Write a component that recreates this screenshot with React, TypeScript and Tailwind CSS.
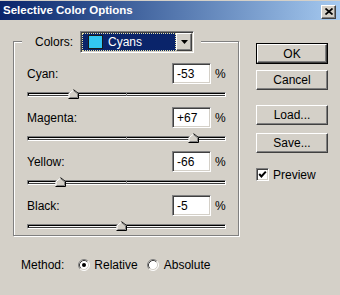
import React from "react";

const raised =
  "border border-t-white border-l-white border-r-[#404040] border-b-[#404040] shadow-[inset_-1px_-1px_0_#808080] bg-[#d4d0c8]";
const sunken =
  "border border-t-[#808080] border-l-[#808080] border-r-white border-b-white shadow-[inset_1px_1px_0_#404040,inset_-1px_-1px_0_#d4d0c8]";

function Thumb() {
  return (
    <svg width="11" height="10" viewBox="0 0 11 10">
      <polygon points="0.5,9.5 0.5,4.5 5.5,0.5 10.5,4.5 10.5,9.5" fill="#d4d0c8" />
      <polyline points="1,9 1,4.7 5.5,1.1" fill="none" stroke="#ffffff" strokeWidth="1" />
      <polyline points="5.5,0.6 10.5,4.6 10.5,9.5 0.5,9.5" fill="none" stroke="#000000" strokeWidth="1" />
      <polyline points="5.5,1.6 9.5,4.8 9.5,8.5 1.5,8.5" fill="none" stroke="#808080" strokeWidth="1" />
    </svg>
  );
}

function Slider({ value }: { value: number }) {
  const left = ((value + 100) / 200) * 199 - 5.5;
  return (
    <div className="relative h-[10px] mt-[5px]">
      <div className="mt-[3px] h-[5px] border border-t-[#808080] border-l-[#808080] border-r-white border-b-white">
        <div className="h-[3px] border-t border-l border-b border-t-[#000] border-l-[#000] border-b-[#404040] bg-[#f4f4f4]" />
      </div>
      <div className="absolute left-[99px] top-[4px] w-[1px] h-[3px] bg-[#808080]" />
      <div className="absolute top-0" style={{ left: `${left}px` }}>
        <Thumb />
      </div>
    </div>
  );
}

function Row({ label, value, num }: { label: string; value: string; num: number }) {
  return (
    <div className="flex flex-col">
      <div className="h-[21px] flex items-center">
        <span className="flex-1">{label}</span>
        <div className={`w-[39px] h-[21px] bg-white flex items-center pl-[4px] ${sunken}`}>{value}</div>
        <span className="ml-[4px] w-[11px]">%</span>
      </div>
      <Slider value={num} />
    </div>
  );
}

function Radio({ checked }: { checked: boolean }) {
  return (
    <svg width="12" height="12" viewBox="0 0 12 12">
      <circle cx="6" cy="6" r="5" fill="#ffffff" />
      <path d="M2.11 9.89 A5.5 5.5 0 0 1 9.89 2.11" fill="none" stroke="#808080" strokeWidth="1" />
      <path d="M9.89 2.11 A5.5 5.5 0 0 1 2.11 9.89" fill="none" stroke="#ffffff" strokeWidth="1" />
      <path d="M2.82 9.18 A4.5 4.5 0 0 1 9.18 2.82" fill="none" stroke="#404040" strokeWidth="1" />
      <path d="M9.18 2.82 A4.5 4.5 0 0 1 2.82 9.18" fill="none" stroke="#d4d0c8" strokeWidth="1" />
      {checked && <circle cx="6" cy="6" r="2" fill="#000000" />}
    </svg>
  );
}

function Button({ children, def, className }: { children: React.ReactNode; def?: boolean; className?: string }) {
  if (def) {
    return (
      <div className={`w-[72px] h-[21px] border border-black flex ${className ?? ""}`}>
        <div className={`flex-1 flex items-center justify-center ${raised}`}>{children}</div>
      </div>
    );
  }
  return (
    <div className={`w-[72px] h-[20px] flex items-center justify-center ${raised} ${className ?? ""}`}>
      {children}
    </div>
  );
}

export default function App() {
  return (
    <div className="w-[340px] h-[295px] bg-[#d4d0c8] flex flex-col overflow-hidden text-black text-[12px] leading-none font-['Liberation_Sans',Arial,sans-serif]">
      <div className="pt-[1px]">
        <div className="h-[19px] flex items-center justify-between pl-[3px] pr-[4px] bg-linear-to-r from-[#0a246a] to-[#a6caf0]">
          <span className="text-white font-bold text-[11.5px]">Selective Color Options</span>
          <div className={`w-[15px] h-[14px] mt-[2px] flex items-center justify-center ${raised}`}>
            <svg width="8" height="7" viewBox="0 0 8 7">
              <path d="M0.5 0.5 L7.5 6.5 M7.5 0.5 L0.5 6.5" stroke="#000" strokeWidth="1.7" />
            </svg>
          </div>
        </div>
      </div>

      <div className="flex items-start">
        <div className="pl-[13px] pt-[21px] flex flex-col">
          <div className="w-[226px] flex flex-col border border-[#808080] shadow-[inset_1px_1px_0_#fff,1px_1px_0_#fff]">
            <div className="-mt-[11px] ml-[8px] self-start h-[22px] flex items-center bg-[#d4d0c8] pl-[13px] pr-[7px]">
              <span className="mr-[7px]">Colors:</span>
              <div className={`w-[114px] h-[22px] bg-white p-[1px] flex ${sunken}`}>
                <div className="flex-1 bg-[#0a246a] border border-dotted border-[#e6e2a8] flex items-center pl-[5px]">
                  <div className="w-[15px] h-[14px] bg-[#33c6f2] border border-[#1a1a1a]" />
                  <span className="ml-[5px] text-white">Cyans</span>
                </div>
                <div className={`w-[16px] h-[18px] flex items-center justify-center ${raised}`}>
                  <svg width="7" height="4" viewBox="0 0 7 4">
                    <polygon points="0,0 7,0 3.5,4" fill="#000" />
                  </svg>
                </div>
              </div>
            </div>
            <div className="mt-[10px] flex flex-col gap-[8px] pl-[13px] pr-[12px] pb-[4px]">
              <Row label="Cyan:" value="-53" num={-53} />
              <Row label="Magenta:" value="+67" num={67} />
              <Row label="Yellow:" value="-66" num={-66} />
              <Row label="Black:" value="-5" num={-5} />
            </div>
          </div>
          <div className="mt-[21px] h-[16px] pl-[8px] flex items-center">
            <span>Method:</span>
            <span className="ml-[14px] flex"><Radio checked /></span>
            <span className="ml-[4px]">Relative</span>
            <span className="ml-[9px] flex"><Radio checked={false} /></span>
            <span className="ml-[5px]">Absolute</span>
          </div>
        </div>

        <div className="ml-[17px] pt-[23px] flex flex-col">
          <Button def>OK</Button>
          <Button className="mt-[6px]">Cancel</Button>
          <Button className="mt-[15px]">Load...</Button>
          <Button className="mt-[8px]">Save...</Button>
          <div className="mt-[15px] flex items-center">
            <div className={`w-[13px] h-[13px] bg-white flex items-center justify-center ${sunken}`}>
              <svg width="9" height="9" viewBox="0 0 9 9">
                <polyline points="1.2,4 3.4,6.4 7.8,1.6" fill="none" stroke="#000" strokeWidth="2" />
              </svg>
            </div>
            <span className="ml-[4px]">Preview</span>
          </div>
        </div>
      </div>
    </div>
  );
}
